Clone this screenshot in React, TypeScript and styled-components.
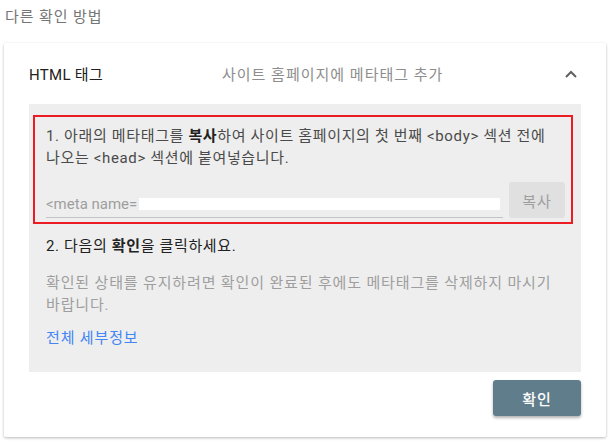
import { createGlobalStyle, styled } from "styled-components";

const GlobalStyle = createGlobalStyle`
  html, body {
    margin: 0;
    padding: 0;
    background: #fff;
  }
  body {
    font-family: Roboto, "Noto Sans CJK KR", sans-serif;
    font-size: 15px;
    color: #212121;
    word-break: keep-all;
  }
`;

function App() {
  return (
    <>
      <GlobalStyle />
      <Page>
        <SectionTitle>다른 확인 방법</SectionTitle>
        <Card>
          <Header>
            <Method>HTML 태그</Method>
            <Summary>사이트 홈페이지에 메타태그 추가</Summary>
            <Toggle aria-label="접기">
              <svg width="12" height="8" viewBox="0 0 12 8">
                <polyline
                  points="1,7 6,2 11,7"
                  fill="none"
                  stroke="#616161"
                  strokeWidth="2"
                />
              </svg>
            </Toggle>
          </Header>
          <Panel>
            <Highlight>
              <Step $tone="mid">
                1. 아래의 메타태그를 <b>복사</b>하여 사이트 홈페이지의 첫 번째
                &lt;body&gt; 섹션 전에 나오는 &lt;head&gt; 섹션에 붙여넣습니다.
              </Step>
              <CopyRow>
                <TagField>
                  <span>&lt;meta name=</span>
                  <Redacted />
                </TagField>
                <CopyButton>복사</CopyButton>
              </CopyRow>
            </Highlight>
            <Body>
              <Step $tone="dark">
                2. 다음의 <b>확인</b>을 클릭하세요.
              </Step>
              <Note>
                확인된 상태를 유지하려면 확인이 완료된 후에도 메타태그를 삭제하지
                마시기 바랍니다.
              </Note>
              <DetailLink href="#">전체 세부정보</DetailLink>
            </Body>
          </Panel>
          <Actions>
            <VerifyButton>확인</VerifyButton>
          </Actions>
        </Card>
      </Page>
    </>
  );
}
export default App;

const Page = styled.div`
  width: 610px;
  height: 445px;
  overflow: hidden;
`;
const SectionTitle = styled.div`
  padding: 7px 0 0 5px;
  height: 36px;
  line-height: 20px;
  font-size: 15px;
  letter-spacing: 0.9px;
  color: #757575;
  box-sizing: border-box;
`;
const Card = styled.div`
  margin: 7px 4px 0 4px;
  width: 602px;
  padding: 0 25px 21px;
  box-sizing: border-box;
  background: #fff;
  box-shadow: 0 1px 3px rgba(0, 0, 0, 0.28);
  border-radius: 2px;
`;
const Header = styled.div`
  display: grid;
  grid-template-columns: 193px 1fr 24px;
  align-items: center;
  height: 61px;
`;
const Method = styled.div`
  font-size: 15px;
  letter-spacing: 0.3px;
  color: #212121;
`;
const Summary = styled.div`
  font-size: 15px;
  letter-spacing: 1px;
  color: #8d8d8d;
`;
const Toggle = styled.span`
  display: flex;
  justify-content: center;
  align-items: center;
  margin-left: 3px;
`;
const Panel = styled.div`
  background: #eeeeee;
  padding: 11px 8px 0 4px;
  height: 268px;
  box-sizing: border-box;
`;
const Highlight = styled.div`
  border: 2px solid #ec1c24;
  padding: 8px 6px 4px 11px;
  height: 109px;
  box-sizing: border-box;
`;
const Step = styled.div<{ $tone: "mid" | "dark" }>`
  font-size: 15px;
  line-height: 22px;
  letter-spacing: 0.65px;
  color: ${(p) => (p.$tone === "dark" ? "#212121" : "#4a4a4a")};
  b {
    font-weight: 700;
    color: #222;
  }
`;
const CopyRow = styled.div`
  display: flex;
  align-items: stretch;
  gap: 6px;
  margin-top: 13px;
  height: 36px;
`;
const TagField = styled.div`
  flex: 1;
  display: flex;
  align-items: flex-end;
  padding-bottom: 4px;
  box-sizing: border-box;
  border-bottom: 1px solid #c4c4c4;
  font-size: 15px;
  line-height: 18px;
  color: #9e9e9e;
  white-space: nowrap;
  overflow: hidden;
`;
const Redacted = styled.span`
  display: block;
  width: 361px;
  height: 12px;
  margin: 0 0 3px 2px;
  background: #fff;
`;
const CopyButton = styled.button`
  width: 56px;
  border: 0;
  border-radius: 3px;
  background: #e0e0e0;
  color: #9e9e9e;
  font-family: Roboto, "Noto Sans CJK KR", sans-serif;
  font-size: 15px;
  letter-spacing: 1px;
  padding: 0;
`;
const Body = styled.div`
  padding: 11px 0 0 13px;
`;
const Note = styled.div`
  margin-top: 15px;
  font-size: 15px;
  line-height: 22px;
  letter-spacing: 0.85px;
  color: #9e9e9e;
`;
const DetailLink = styled.a`
  display: block;
  margin-top: 11px;
  font-size: 15px;
  line-height: 22px;
  letter-spacing: 0.85px;
  color: #4285f4;
  text-decoration: none;
`;
const Actions = styled.div`
  display: flex;
  justify-content: flex-end;
  padding-top: 8px;
`;
const VerifyButton = styled.button`
  width: 88px;
  height: 36px;
  border: 0;
  border-radius: 3px;
  background: #607d8b;
  color: #fff;
  font-family: Roboto, "Noto Sans CJK KR", sans-serif;
  font-size: 15px;
  font-weight: 500;
  letter-spacing: 1px;
  box-shadow: 0 2px 3px rgba(0, 0, 0, 0.3);
`;
